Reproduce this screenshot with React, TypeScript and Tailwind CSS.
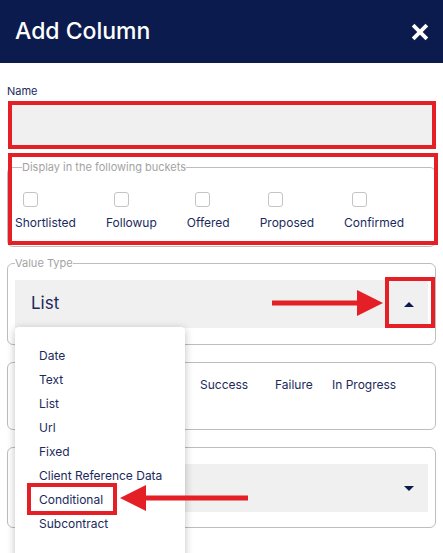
import { X } from "lucide-react";

const buckets = ["Shortlisted", "Followup", "Offered", "Proposed", "Confirmed"];
const valueTypes = ["Date", "Text", "List", "Url", "Fixed", "Client Reference Data", "Conditional", "Subcontract"];

function RedArrow({ left, top, width, dir }: { left: number; top: number; width: number; dir: "right" | "left" }) {
  // 26px tall arrow, head 26px long, shaft 5px thick
  const head = 26;
  return (
    <svg className="absolute" style={{ left, top }} width={width} height={26} viewBox={`0 0 ${width} 26`}>
      {dir === "right" ? (
        <>
          <rect x={0} y={10.5} width={width - head + 2} height={5} fill="#e41f26" />
          <polygon points={`${width - head},0 ${width},13 ${width - head},26`} fill="#e41f26" />
        </>
      ) : (
        <>
          <rect x={head - 2} y={10.5} width={width - head + 2} height={5} fill="#e41f26" />
          <polygon points={`${head},0 0,13 ${head},26`} fill="#e41f26" />
        </>
      )}
    </svg>
  );
}

export default function App() {
  return (
    <div className="relative h-[553px] w-[443px] overflow-hidden bg-white font-['Inter',sans-serif] text-[#1b2a5c]">
      <header className="flex h-[63px] items-center justify-between bg-[#0c1b4d] pl-[15px] pr-[12px]">
        <h1 className="text-[23px] font-medium text-white">Add Column</h1>
        <X className="h-[22px] w-[22px] text-white" strokeWidth={4.2} strokeLinecap="square" />
      </header>

      <div className="px-[7px]">
        <label className="block pt-[21px] text-[11px] leading-[14px]">Name</label>
        <div className="mt-[3px] ml-[1px] h-[48px] border-4 border-[#e41f26] bg-[#f0f0f0]" />

        <fieldset className="mt-[11px] h-[87px] rounded-[6px] border border-[#bdbdbd] pl-[7px]">
          <legend className="ml-[7px] text-[11px] leading-[14px] text-[#a3a3a3]">Display in the following buckets</legend>
          <div className="flex gap-[30px] pt-[18px]">
            {buckets.map((b) => (
              <div key={b} className="flex flex-col items-start">
                <span className="ml-[8px] h-[15px] w-[15px] rounded-[3px] border-[1.5px] border-[#c4c4c4]" />
                <span className="mt-[9px] text-[12px] leading-[14px]">{b}</span>
              </div>
            ))}
          </div>
        </fieldset>

        <fieldset className="mt-[9px] h-[89px] rounded-[6px] border border-[#bdbdbd]">
          <legend className="ml-[7px] text-[11px] leading-[14px] text-[#a3a3a3]">Value Type</legend>
          <div className="mx-[7px] mt-[10px] flex h-[48px] items-center justify-between bg-[#f0f0f0] pl-[16px] pr-[14px]">
            <span className="text-[17px]">List</span>
            <span className="h-0 w-0 border-x-[5px] border-b-[5px] border-x-transparent border-b-[#0c1b4d]" />
          </div>
        </fieldset>

        <fieldset className="mt-[17px] h-[68px] rounded-[6px] border border-[#bdbdbd]">
          <div className="flex pl-[192px] pt-[15px] text-[12px] leading-[14px]">
            <span className="w-[75px]">Success</span>
            <span className="w-[57px]">Failure</span>
            <span>In Progress</span>
          </div>
        </fieldset>

        <fieldset className="mt-[17px] h-[81px] rounded-[6px] border border-[#bdbdbd]">
          <div className="mx-[7px] mt-[16px] flex h-[48px] items-center justify-end bg-[#f0f0f0] pr-[14px]">
            <span className="h-0 w-0 border-x-[5px] border-t-[5px] border-x-transparent border-t-[#0c1b4d]" />
          </div>
        </fieldset>
      </div>

      {/* open dropdown */}
      <ul className="absolute left-[15px] top-[327px] h-[240px] w-[170px] rounded-[4px] bg-white pl-[24px] pt-[17px] text-[12px] leading-[24px] shadow-[0_2px_8px_rgba(0,0,0,0.25)]">
        {valueTypes.map((v) => (
          <li key={v}>{v}</li>
        ))}
      </ul>

      {/* annotations */}
      <div className="absolute left-[8px] top-[153px] h-[92px] w-[430px] border-4 border-[#e41f26]" />
      <div className="absolute left-[385px] top-[277px] h-[51px] w-[50px] border-4 border-[#e41f26]" />
      <RedArrow left={272} top={290} width={111} dir="right" />
      <div className="absolute left-[27px] top-[483px] h-[32px] w-[90px] border-4 border-[#e41f26]" />
      <RedArrow left={120} top={485} width={128} dir="left" />
    </div>
  );
}
